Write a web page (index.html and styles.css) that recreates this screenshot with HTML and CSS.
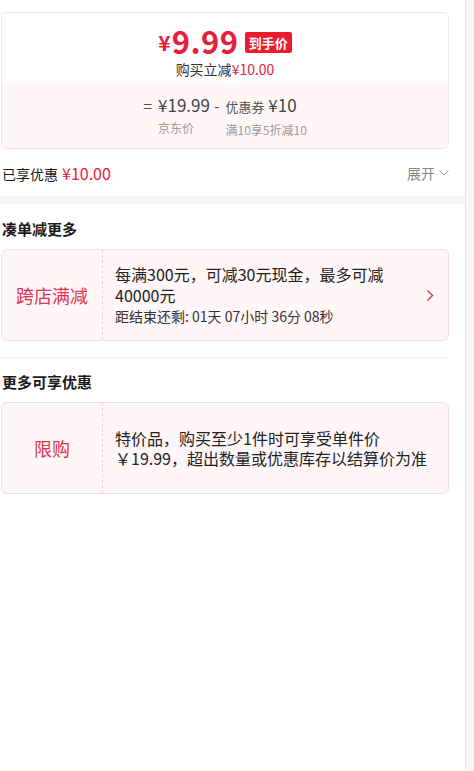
FILE: index.html
```html
<!DOCTYPE html>
<html lang="zh-CN">
<head>
<meta charset="utf-8">
<title>优惠明细</title>
<link rel="stylesheet" href="styles.css">
</head>
<body>
<div class="page">
  <div class="main">
    <section class="summary">
      <div class="price-card">
        <div class="pc-top">
          <div class="final"><span class="yen">¥</span><span class="num">9.99</span><span class="tag">到手价</span></div>
          <div class="save">购买立减<em>¥10.00</em></div>
        </div>
        <div class="pc-bottom">
          <span class="op">=</span>
          <div class="term">
            <div class="val">¥19.99</div>
            <div class="lbl">京东价</div>
          </div>
          <span class="op minus">-</span>
          <div class="term">
            <div class="val"><small>优惠券</small> ¥10</div>
            <div class="lbl">满10享5折减10</div>
          </div>
        </div>
      </div>
      <div class="enjoy-row">
        <div class="enjoy">已享优惠<em>¥10.00</em></div>
        <div class="expand">展开<svg width="10" height="6" viewBox="0 0 10 6"><polyline points="0.5,0.5 5,5 9.5,0.5" fill="none" stroke="#999" stroke-width="1"/></svg></div>
      </div>
    </section>
    <div class="band"></div>
    <section class="group">
      <h3 class="group-title">凑单减更多</h3>
      <div class="promo">
        <div class="promo-name">跨店满减</div>
        <div class="promo-body">
          <div class="promo-text">每满300元，可减30元现金，最多可减<br>40000元</div>
          <div class="countdown">距结束还剩: 01天 07小时 36分 08秒</div>
        </div>
        <div class="promo-arrow"><svg width="8" height="13" viewBox="0 0 8 13"><polyline points="1.5,1.5 6.5,6.5 1.5,11.5" fill="none" stroke="#c93358" stroke-width="1.4"/></svg></div>
      </div>
      <div class="divider"></div>
    </section>
    <section class="group group-more">
      <h3 class="group-title">更多可享优惠</h3>
      <div class="promo">
        <div class="promo-name">限购</div>
        <div class="promo-body">
          <div class="promo-text tight">特价品，购买至少1件时可享受单件价<br>￥19.99，超出数量或优惠库存以结算价为准</div>
        </div>
      </div>
    </section>
  </div>
  <div class="track"></div>
</div>
</body>
</html>
```
FILE: styles.css
```css
html, body {
  margin: 0;
  padding: 0;
  background: #fff;
}
body {
  font-family: "Noto Sans CJK SC", "Liberation Sans", sans-serif;
  color: #1a1a1a;
}
.page {
  display: flex;
  min-height: 771px;
}
.main {
  width: 465px;
  flex: none;
}
.track {
  flex: 1;
  border-left: 1px solid #e4e4e4;
  background: #f8f8f8;
}

/* summary */
.summary {
  padding: 12px 16px 0 1px;
}
.price-card {
  border: 1px solid #f3e2e5;
  border-radius: 6px;
  overflow: hidden;
}
.pc-top {
  position: relative;
  background: #fff;
  padding: 10px 0 4px;
  text-align: center;
}
.pc-top::after {
  content: "";
  position: absolute;
  left: calc(50% + 3px);
  bottom: -4px;
  border-left: 4px solid transparent;
  border-right: 4px solid transparent;
  border-top: 4px solid #fff;
  z-index: 1;
}
.final {
  display: flex;
  justify-content: center;
  align-items: center;
  height: 36px;
  line-height: 36px;
  color: #e6203a;
  font-weight: 700;
}
.yen {
  font-size: 21px;
  margin-right: 1px;
  margin-top: 2px;
}
.num {
  font-size: 31px;
  letter-spacing: 0.5px;
}
.tag {
  display: block;
  margin-left: 6px;
  margin-top: 3px;
  background: #ec1c2f;
  color: #fff;
  font-size: 13px;
  line-height: 21px;
  padding: 0 4px;
  border-radius: 2px;
}
.save {
  font-size: 14px;
  line-height: 20px;
  color: #333;
}
.save em {
  font-style: normal;
  color: #e6203a;
}
.pc-bottom {
  background: #fff7f7;
  display: flex;
  justify-content: center;
  align-items: flex-start;
  padding: 11px 0 10px;
}
.op {
  font-size: 16px;
  line-height: 22px;
  color: #555;
  margin: 0 6px 0 0;
}
.op.minus {
  margin: 0 6px 0 4px;
}
.val {
  font-size: 17px;
  line-height: 22px;
  color: #444;
  white-space: nowrap;
}
.val small {
  font-size: 13px;
  color: #555;
}
.lbl {
  font-size: 12px;
  line-height: 17px;
  color: #9a9a9a;
  margin-top: 3px;
  white-space: nowrap;
}
.enjoy-row {
  display: flex;
  justify-content: space-between;
  align-items: center;
  height: 47px;
  padding-left: 1px;
}
.enjoy {
  font-size: 14px;
  color: #1a1a1a;
}
.enjoy em {
  font-style: normal;
  color: #e6203a;
  font-size: 16px;
  margin-left: 4px;
}
.expand {
  display: flex;
  align-items: center;
  gap: 4px;
  font-size: 14px;
  color: #888;
}
.band {
  height: 8px;
  background: #f5f6fa;
}

/* groups */
.group {
  padding: 14px 16px 0 1px;
}
.group-more {
  padding-top: 13px;
}
.group-title {
  margin: 0 0 9px 1px;
  font-size: 15px;
  line-height: 22px;
  font-weight: 700;
  color: #1a1a1a;
}
.promo {
  display: flex;
  min-height: 90px;
  border: 1px solid #f2dfe3;
  border-radius: 6px;
  background: #fff6f7;
}
.promo-name {
  width: 100px;
  flex: none;
  border-right: 1px dashed #e9d3d7;
  display: flex;
  align-items: center;
  justify-content: center;
  font-size: 18px;
  color: #de3450;
}
.promo-body {
  flex: 1;
  padding-left: 12px;
  display: flex;
  flex-direction: column;
  justify-content: center;
}
.promo-text {
  font-size: 16px;
  line-height: 21px;
  color: #222;
}
.promo-text.tight {
  line-height: 20px;
}
.countdown {
  font-size: 14px;
  line-height: 20px;
  color: #333;
}
.promo-arrow {
  width: 34px;
  flex: none;
  display: flex;
  align-items: center;
  justify-content: flex-end;
  padding-right: 14px;
}
.divider {
  height: 1px;
  background: #eeeeee;
  margin: 16px 0 0 -1px;
}
```
